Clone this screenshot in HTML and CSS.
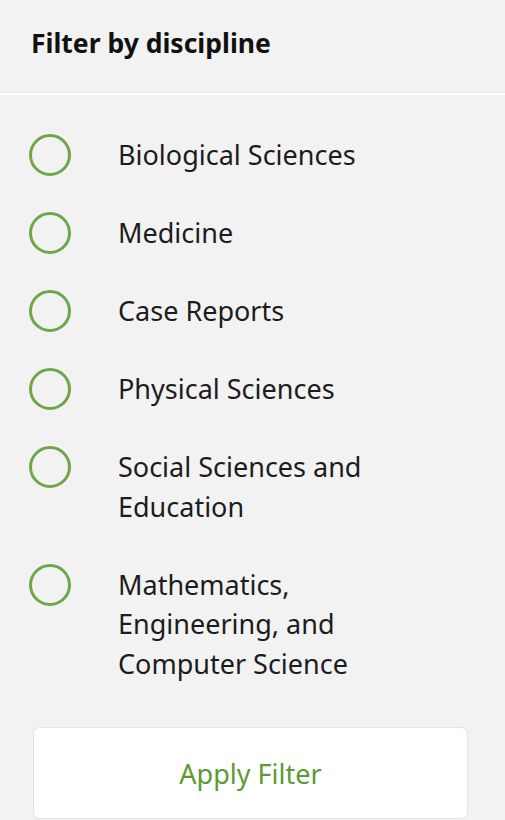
FILE: index.html
```html
<!DOCTYPE html>
<html>
<head>
<meta charset="utf-8">
<link rel="stylesheet" href="styles.css">
</head>
<body>
<div class="panel">
  <div class="header">Filter by discipline</div>
  <ul class="options">
    <li class="option"><span class="radio"></span><span class="label">Biological Sciences</span></li>
    <li class="option"><span class="radio"></span><span class="label">Medicine</span></li>
    <li class="option"><span class="radio"></span><span class="label">Case Reports</span></li>
    <li class="option"><span class="radio"></span><span class="label">Physical Sciences</span></li>
    <li class="option"><span class="radio"></span><span class="label">Social Sciences and Education</span></li>
    <li class="option"><span class="radio"></span><span class="label">Mathematics, Engineering, and Computer Science</span></li>
  </ul>
  <div class="actions">
    <button class="apply">Apply Filter</button>
  </div>
</div>
</body>
</html>
```
FILE: styles.css
```css
html, body {
  margin: 0;
  padding: 0;
  background: #f2f2f2;
}
body {
  font-family: "Noto Sans", "Open Sans", sans-serif;
  color: #1c1c1c;
}
.panel {
  width: 505px;
}
.header {
  font-size: 26.5px;
  font-weight: 700;
  color: #111;
  padding: 25px 31px 0;
  height: 68px;
  line-height: 36px;
  border-bottom: 2px solid #ffffff;
  box-shadow: 0 -1px 0 #e8e8e8 inset;
}
.options {
  list-style: none;
  margin: 0;
  padding: 40px 0 0 29px;
}
.option {
  display: flex;
  align-items: flex-start;
  gap: 47px;
  margin-bottom: 38.5px;
}
.option:last-child {
  margin-bottom: 0;
}
.radio {
  flex: none;
  width: 42px;
  height: 42px;
  box-sizing: border-box;
  border: 3px solid #6fa64a;
  border-radius: 50%;
  margin: -1px 0 -2px;
}
.label {
  font-size: 27px;
  line-height: 39.5px;
  max-width: 320px;
}
.actions {
  padding: 44px 37px 0 33px;
}
.apply {
  display: block;
  width: 435px;
  height: 92px;
  background: #ffffff;
  border: 1px solid #e2e2e2;
  border-radius: 7px;
  font-family: "Noto Sans", "Open Sans", sans-serif;
  font-size: 27px;
  color: #5e9a34;
  cursor: pointer;
}
```
